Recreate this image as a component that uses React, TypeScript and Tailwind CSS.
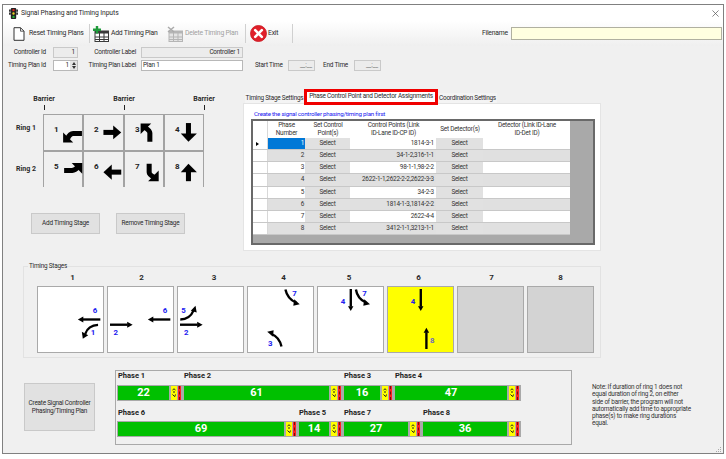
import React from "react";

const font = "font-['Roboto',sans-serif]";
const tight = "text-[6.4px] tracking-[-0.22px]";

const plans = ["1814-3-1", "34-1-2,316-1-1", "98-1-1,98-2-2", "2622-1-1,2622-2-2,2622-3-3", "34-2-3", "1814-1-3,1814-2-2", "2622-4-4", "3412-1-1,3213-1-1"];

const ringOne = [
  { phase: "Phase 1", value: 22, width: "w-[51px]", col: "w-[66px]" },
  { phase: "Phase 2", value: 61, width: "w-[145px]", col: "w-[160px]" },
  { phase: "Phase 3", value: 16, width: "w-[36px]", col: "w-[51px]" },
  { phase: "Phase 4", value: 47, width: "w-[112px]", col: "w-[127px]" },
];

const ringTwo = [
  { phase: "Phase 6", value: 69, width: "w-[166px]", col: "w-[181px]" },
  { phase: "Phase 5", value: 14, width: "w-[30px]", col: "w-[45px]" },
  { phase: "Phase 7", value: 27, width: "w-[64px]", col: "w-[79px]" },
  { phase: "Phase 8", value: 36, width: "w-[84px]", col: "w-[99px]" },
];

type Line = { d: string; head: string };
type Tag = { t: string; x: number; y: number; c?: string };

// big arrows in the ring grid
const bigArrows: { n: string; d: string; head: string }[] = [
  { n: "1", d: "M37.7 18.4H29Q25.5 18.4 23.5 23.5", head: "M19 27.4V17.5L29 27.4Z" },
  { n: "2", d: "M19.3 17.3H30", head: "M29 10.5L37 17.3L29 24Z" },
  { n: "3", d: "M24.7 26.5V18Q24.7 15.5 20 12.5", head: "M15.5 8.5H26L15.5 19Z" },
  { n: "4", d: "M23.3 8V20", head: "M15.7 18.3H31.7L23.3 26.7Z" },
  { n: "5", d: "M20 18.3H28Q31 18 33.5 15", head: "M38 11H27.5L38 21.5Z" },
  { n: "6", d: "M37 20H26", head: "M27.6 12.3V27.7L19.3 20Z" },
  { n: "7", d: "M24 11.7V20Q24 22.5 29 25", head: "M33.5 29H23L33.5 18.5Z" },
  { n: "8", d: "M23.3 29V18", head: "M15.7 20H31.7L23.3 11.7Z" },
];

const stages: { n: string; pad: string; bg: string; lines: Line[]; tags: Tag[] }[] = [
  {
    n: "1", pad: "pl-[4px]", bg: "bg-white",
    lines: [
      { d: "M64.3 34H46", head: "M47 31L41.5 34L47 37Z" },
      { d: "M62 39.5Q52 40 49 48.5", head: "M45.5 46.5L52 50L46.5 53.5Z" },
    ],
    tags: [{ t: "6", x: 56.5, y: 27 }, { t: "1", x: 54.5, y: 49.5 }],
  },
  {
    n: "2", pad: "pl-[2px]", bg: "bg-white",
    lines: [
      { d: "M3 39.3H21", head: "M20.5 36.3L26 39.3L20.5 42.3Z" },
      { d: "M64.3 34H46", head: "M47 31L41.5 34L47 37Z" },
    ],
    tags: [{ t: "2", x: 6.7, y: 49.5 }, { t: "6", x: 56.5, y: 27 }],
  },
  {
    n: "3", pad: "pl-[7px]", bg: "bg-white",
    lines: [
      { d: "M3 39.3H21", head: "M20.5 36.3L26 39.3L20.5 42.3Z" },
      { d: "M3.3 34Q13 34 17 24.5", head: "M14 25L18.8 20L20 27Z" },
    ],
    tags: [{ t: "2", x: 7, y: 49.5 }, { t: "5", x: 4.3, y: 27 }],
  },
  {
    n: "4", pad: "pl-[6px]", bg: "bg-white",
    lines: [
      { d: "M39 3.5Q41 13 50 17", head: "M48 13.5L53.5 18.5L47 20Z" },
      { d: "M35 61.5Q33 52 24.5 48.5", head: "M26.5 51.5L20.5 46.5L27 45Z" },
    ],
    tags: [{ t: "7", x: 46, y: 10 }, { t: "3", x: 21.3, y: 61 }],
  },
  {
    n: "5", pad: "pr-[3px]", bg: "bg-white",
    lines: [
      { d: "M34.3 3V21", head: "M31.5 20.5L34.3 25.5L37 20.5Z" },
      { d: "M39.5 3.5Q41 13 50 17", head: "M48 13.5L53.8 18.5L47 20Z" },
    ],
    tags: [{ t: "4", x: 24, y: 18.5 }, { t: "7", x: 46, y: 10 }],
  },
  {
    n: "6", pad: "pr-[4px]", bg: "bg-[#ffff00]",
    lines: [
      { d: "M34.3 3V21", head: "M31.5 20.5L34.3 25.5L37 20.5Z" },
      { d: "M40 64V47", head: "M37.2 47.5L40 42.5L42.8 47.5Z" },
    ],
    tags: [{ t: "4", x: 24, y: 18.5 }, { t: "8", x: 43.7, y: 58, c: "#6c6cc0" }],
  },
  { n: "7", pad: "pl-[2px]", bg: "bg-[#d3d3d3]", lines: [], tags: [] },
  { n: "8", pad: "", bg: "bg-[#d3d3d3]", lines: [], tags: [] },
];

function TrafficLight() {
  return (
    <svg viewBox="0 0 10 12" className="w-[9px] h-[11px]">
      <path d="M0 1.5H2V4H0ZM8 1.5H10V4H8ZM0 5H2V7.5H0ZM8 5H10V7.5H8Z" fill="#333" />
      <rect x="2" y="0" width="6" height="12" rx="1" fill="#222" />
      <circle cx="5" cy="2.2" r="1.3" fill="#e02020" />
      <circle cx="5" cy="6" r="1.3" fill="#e8d020" />
      <circle cx="5" cy="9.8" r="1.3" fill="#20b030" />
    </svg>
  );
}

function DocIcon() {
  return (
    <svg viewBox="0 0 12 14" className="w-[12px] h-[14px]">
      <path d="M1 .7H7.5L11 4.2V13.3H1Z" fill="white" stroke="#333" strokeWidth="1" />
      <path d="M7.5 .7V4.2H11" fill="none" stroke="#333" strokeWidth=".8" />
    </svg>
  );
}

function TableIcon({ disabled }: { disabled?: boolean }) {
  const c = disabled ? "#b5b5b5" : "#3a3a3a";
  return (
    <svg viewBox="0 0 16 16" className="w-[16px] h-[16px]">
      <rect x="2" y="5" width="13.5" height="10.5" fill={disabled ? "#e4e4e4" : "white"} stroke={c} />
      <rect x="2" y="5" width="13.5" height="2.5" fill={c} />
      <path d="M2 11H15.5M2 13.5H15.5M6.5 5V15.5M11 5V15.5" stroke={c} strokeWidth="1" />
      {disabled ? (
        <path d="M1 1L7 6M7 1L1 6" stroke="#aaa" strokeWidth="1.5" />
      ) : (
        <path d="M0 3.8H8M4 0V7.6" stroke="#1e9a3a" strokeWidth="2.4" />
      )}
    </svg>
  );
}

function ExitIcon() {
  return (
    <svg viewBox="0 0 17 17" className="w-[17px] h-[17px]">
      <circle cx="8.5" cy="8.5" r="8" fill="#e0202a" stroke="#c81820" strokeWidth=".8" />
      <path d="M5.2 5.2L11.8 11.8M11.8 5.2L5.2 11.8" stroke="white" strokeWidth="2.6" strokeLinecap="round" />
    </svg>
  );
}

function Field({ className, children }: { className: string; children?: React.ReactNode }) {
  return <div className={`h-[11px] border border-[#c9c9c9] text-right pr-[2px] leading-[9px] ${className}`}>{children}</div>;
}

function PhaseBar({ col, width, phase, value, bottom }: { col: string; width: string; phase: string; value: number; bottom?: boolean }) {
  return (
    <div className={`shrink-0 ${col}`}>
      <div className={`h-[14px] pl-[1px] text-[7.5px] font-bold leading-[10px] text-[#222] ${bottom ? "pt-[1px]" : ""}`}>{phase}</div>
      <div className="flex h-[16px] bg-[#a9a9a9] py-[1px] pl-[1px]">
        <div className={`flex items-center justify-center bg-[#00c000] text-[11px] font-bold text-white ${width}`}>{value}</div>
        <div className="ml-[2px] w-[6px] bg-[#ffff00] flex items-center justify-center">
          <svg viewBox="0 0 6 14" className="w-[6px] h-[14px]">
            <path d="M1.5 4L3 2.8L4.5 4M2 6H4M1.5 8.5L3 10M4.5 8.5L3.5 11" stroke="#222" strokeWidth="1" fill="none" />
          </svg>
        </div>
        <div className="ml-[1px] w-[3px] bg-[#ff2020] flex justify-center">
          <div className="w-[1px] border-l border-dashed border-[#701010]" />
        </div>
      </div>
    </div>
  );
}

export default function App() {
  return (
    <div className={`w-[726px] h-[459px] bg-white pt-[4px] pl-[2px] overflow-hidden text-[6.8px] text-[#2a2a2a] whitespace-nowrap ${font}`}>
      <div className="relative w-[722px] h-[450px] border border-[#808080] bg-[#f0f0f0]">
        <div className="flex items-center h-[16px] bg-white pl-[6px] tracking-[-0.1px]">
          <TrafficLight />
          <span className="ml-[3px]">Signal Phasing and Timing Inputs</span>
          <svg viewBox="0 0 8 8" className="ml-auto mr-[4px] w-[7px] h-[7px]">
            <path d="M.5 .5L7.5 7.5M7.5 .5L.5 7.5" stroke="#555" strokeWidth=".8" />
          </svg>
        </div>

        <div className="flex items-center h-[25px] bg-gradient-to-b from-white to-[#efefef] tracking-[-0.2px]">
          <div className="ml-[10px] w-[12px]"><DocIcon /></div>
          <span className="ml-[4px] w-[60px]">Reset Timing Plans</span>
          <div className="w-[1px] h-[19px] bg-[#d0d0d0]" />
          <div className="ml-[3px]"><TableIcon /></div>
          <span className="ml-[2px] w-[56px]">Add Timing Plan</span>
          <TableIcon disabled />
          <span className="ml-[2px] w-[60px] text-[#a0a0a0]">Delete Timing Plan</span>
          <div className="w-[1px] h-[19px] bg-[#d0d0d0]" />
          <div className="ml-[4px]"><ExitIcon /></div>
          <span className="ml-[1px] w-[24px]">Exit</span>
          <div className="w-[1px] h-[19px] bg-[#d0d0d0]" />
          <span className="ml-auto">Filename</span>
          <div className="ml-[3px] mr-[1px] w-[211px] h-[13px] border border-[#b0b0a0] bg-[#ffffe0]" />
        </div>

        <div className="flex flex-col gap-[2px] pt-[1px] text-[6.4px] tracking-[-0.2px]">
          <div className="flex items-center h-[11px]">
            <span className="w-[43px] text-right">Controller Id</span>
            <Field className="ml-[7px] w-[25px] bg-[#ececec]">1</Field>
            <span className="w-[58px] text-right">Controller Label</span>
            <Field className="ml-[5px] w-[102px] bg-[#ececec]">Controller 1</Field>
          </div>
          <div className="flex items-center h-[11px]">
            <span className="w-[43px] text-right">Timing Plan Id</span>
            <div className="ml-[7px] flex w-[25px] h-[11px] border border-[#b8b8b8] bg-white leading-[9px]">
              <span className="flex-1 text-right pr-[1px]">1</span>
              <div className="flex flex-col justify-center gap-[1px] w-[7px] bg-[#e4e4e4] items-center">
                <div className="border-x-[2px] border-b-[3px] border-x-transparent border-b-[#333]" />
                <div className="border-x-[2px] border-t-[3px] border-x-transparent border-t-[#333]" />
              </div>
            </div>
            <span className="w-[58px] text-right">Timing Plan Label</span>
            <div className="ml-[5px] w-[102px] h-[11px] border border-[#b8b8b8] bg-white pl-[1px] leading-[9px]">Plan 1</div>
            <span className="ml-[12px] w-[27px]">Start Time</span>
            <Field className="ml-[6px] w-[27px] bg-[#ececec] text-center text-[#777]">__:__</Field>
            <span className="ml-[8px] w-[26px]">End Time</span>
            <Field className="ml-[5px] w-[27px] bg-[#ececec] text-center text-[#777]">__:__</Field>
          </div>
        </div>

        <div className="flex h-[195px]">
          <div className="w-[240px] shrink-0 pt-[24px]">
            <div className="ml-[41px] w-[160px] flex justify-between font-bold text-[7px] leading-[8px]">
              {["a", "b", "c"].map((k) => (
                <div key={k} className="w-0 flex flex-col items-center">
                  <span>Barrier</span>
                  <div className="mt-[2px] w-[1px] h-[5px] bg-[#222] shrink-0" />
                </div>
              ))}
            </div>
            <div className="flex mt-[4px]">
              <div className="w-[13px]" />
              <div className="w-[27px] flex flex-col font-bold text-[7px] leading-[10px]">
                <div className="h-[37px] pt-[9px]">Ring 1</div>
                <div className="h-[36px] pt-[13px]">Ring 2</div>
              </div>
              <div className="grid grid-cols-4 gap-[2px] p-[1px] w-[161px] h-[73px] bg-[#a3a3a3]">
                {bigArrows.map((a) => (
                  <div key={a.n} className="bg-[#f0f0f0]">
                    <svg viewBox="0 0 38 35" className="w-full h-full overflow-visible">
                      <text x="10" y="17" fontSize="8" fontWeight="700" fill="#222">{a.n}</text>
                      <path d={a.d} fill="none" stroke="black" strokeWidth="5" />
                      <path d={a.head} fill="black" />
                    </svg>
                  </div>
                ))}
              </div>
            </div>
            <div className={`flex mt-[26px] ml-[28px] gap-[16px] ${tight}`}>
              <div className="flex items-center justify-center w-[69px] h-[21px] bg-[#e1e1e1] border border-[#c9c9c9]">Add Timing Stage</div>
              <div className="flex items-center justify-center w-[69px] h-[21px] bg-[#e1e1e1] border border-[#c9c9c9]">Remove Timing Stage</div>
            </div>
          </div>

          <div className="w-[358px] shrink-0 pt-[18px]">
            <div className={`relative z-10 flex items-end h-[16px] pl-[2px] ${tight}`}>
              <div className="w-[59px] h-[10px] mb-[2px] bg-[#f4f4f4] text-center leading-[10px]">Timing Stage Settings</div>
              <div className="w-[134px] h-[16px] border-[3px] border-[#f00000] bg-white text-center leading-[9px]">Phase Control Point and Detector Assignments</div>
              <div className="w-[59px] h-[10px] mb-[2px] bg-[#f4f4f4] text-center leading-[10px]">Coordination Settings</div>
            </div>
            <div className="-mt-[2px] h-[148px] bg-white border border-[#e4e4e4] pt-[5px] pl-[7px]">
              <div className="ml-[3px] h-[10px] text-[6.2px] tracking-[-0.22px] leading-[10px] text-[#2020f0]">Create the signal controller phasing/timing plan first</div>
              <div className={`w-[344px] h-[126px] border-2 border-[#696969] bg-[#a9a9a9] ${tight}`}>
                <div className="grid grid-cols-[15px_37px_46px_85px_48px_86px] w-[317px] h-[17px] bg-white text-center leading-[7.5px] text-[#333]">
                  <div className="border-r border-[#d8d8d8]" />
                  <div className="pt-[1px]">Phase<br />Number</div>
                  <div className="pt-[1px]">Set Control<br />Point(s)</div>
                  <div className="pt-[1px]">Control Points (Link<br />ID-Lane ID-CP ID)</div>
                  <div className="pt-[5px]">Set Detector(s)</div>
                  <div className="pt-[1px]">Detector  (Link ID-Lane<br />ID-Det ID)</div>
                </div>
                {plans.map((plan, i) => {
                  const rowBg = i % 2 === 1 ? "bg-[#e0e0e0]" : "bg-white";
                  return (
                    <div key={plan} className="grid grid-cols-[15px_37px_46px_85px_48px_86px] w-[317px] h-[12.15px] leading-[11px] text-[#333] border-b border-[#c8c8c8] bg-white">
                      <div className="flex items-center pl-[3px] border-r border-[#d8d8d8]">
                        {i === 0 && <div className="border-y-[2px] border-l-[3px] border-y-transparent border-l-black" />}
                      </div>
                      <div className={`text-right pr-[1px] ${i === 0 ? "bg-[#0078d7] text-white" : rowBg}`}>{i + 1}</div>
                      <div className={`${rowBg} pr-[1px]`}><div className="h-full bg-[#e1e1e1] text-center">Select</div></div>
                      <div className={`${rowBg} text-right pr-[2px]`}>{plan}</div>
                      <div className={`${rowBg} pr-[1px]`}><div className="h-full bg-[#e1e1e1] text-center">Select</div></div>
                      <div className={rowBg} />
                    </div>
                  );
                })}
              </div>
            </div>
          </div>
        </div>

        <div className="relative ml-[20px] w-[578px] h-[92px] border border-[#e2e2e2]">
          <span className={`absolute -top-[5px] left-[4px] bg-[#f0f0f0] px-[1px] leading-[9px] ${tight}`}>Timing Stages</span>
          <div className="flex gap-[3px] pl-[13px] pt-[5px]">
            {stages.map((s) => (
              <div key={s.n} className="w-[67px] shrink-0">
                <div className={`h-[14px] text-center text-[8px] font-bold leading-[12px] ${s.pad}`}>{s.n}</div>
                <div className={`w-[67px] h-[67px] border-[1.5px] border-[#a9a9a9] ${s.bg}`}>
                  <svg viewBox="1 1 65 65" className="w-[64px] h-[64px] overflow-visible">
                    {s.lines.map((l) => (
                      <g key={l.d}>
                        <path d={l.d} fill="none" stroke="black" strokeWidth="2.4" />
                        <path d={l.head} fill="black" />
                      </g>
                    ))}
                    {s.tags.map((t) => (
                      <text key={t.t + t.x} x={t.x} y={t.y} fontSize="8" fontWeight="700" fill={t.c ?? "#2020f0"}>{t.t}</text>
                    ))}
                  </svg>
                </div>
              </div>
            ))}
          </div>
        </div>

        <div className="flex items-start mt-[12px]">
          <div className={`mt-[13px] ml-[21px] flex items-center justify-center w-[71px] h-[48px] bg-[#e1e1e1] border border-[#c9c9c9] text-center leading-[8px] ${tight}`}>
            <span>Create Signal Controller<br />Phasing/Timing Plan</span>
          </div>
          <div className="ml-[20px] w-[457px] h-[75px] border border-[#a9a9a9] pl-[1px]">
            <div className="flex">
              {ringOne.map((p) => <PhaseBar key={p.phase} {...p} />)}
            </div>
            <div className="flex mt-[6px]">
              {ringTwo.map((p) => <PhaseBar key={p.phase} {...p} bottom />)}
            </div>
          </div>
          <p className="ml-[20px] mt-[14px] w-[100px] text-[6.4px] tracking-[-0.2px] leading-[7.3px] text-[#333]">
            Note: If duration of ring 1 does not<br />
            equal duration of ring 2, on either<br />
            side of barrier, the program will not<br />
            automatically add time to appropriate<br />
            phase(s) to make ring durations<br />
            equal.
          </p>
        </div>

        <svg viewBox="0 0 6 6" className="absolute right-[1px] bottom-[1px] w-[6px] h-[6px]">
          <path d="M4 1H5V2H4ZM2 3H3V4H2ZM4 3H5V4H4ZM0 5H1V6H0ZM2 5H3V6H2ZM4 5H5V6H4Z" fill="#aaa" />
        </svg>
      </div>
    </div>
  );
}
